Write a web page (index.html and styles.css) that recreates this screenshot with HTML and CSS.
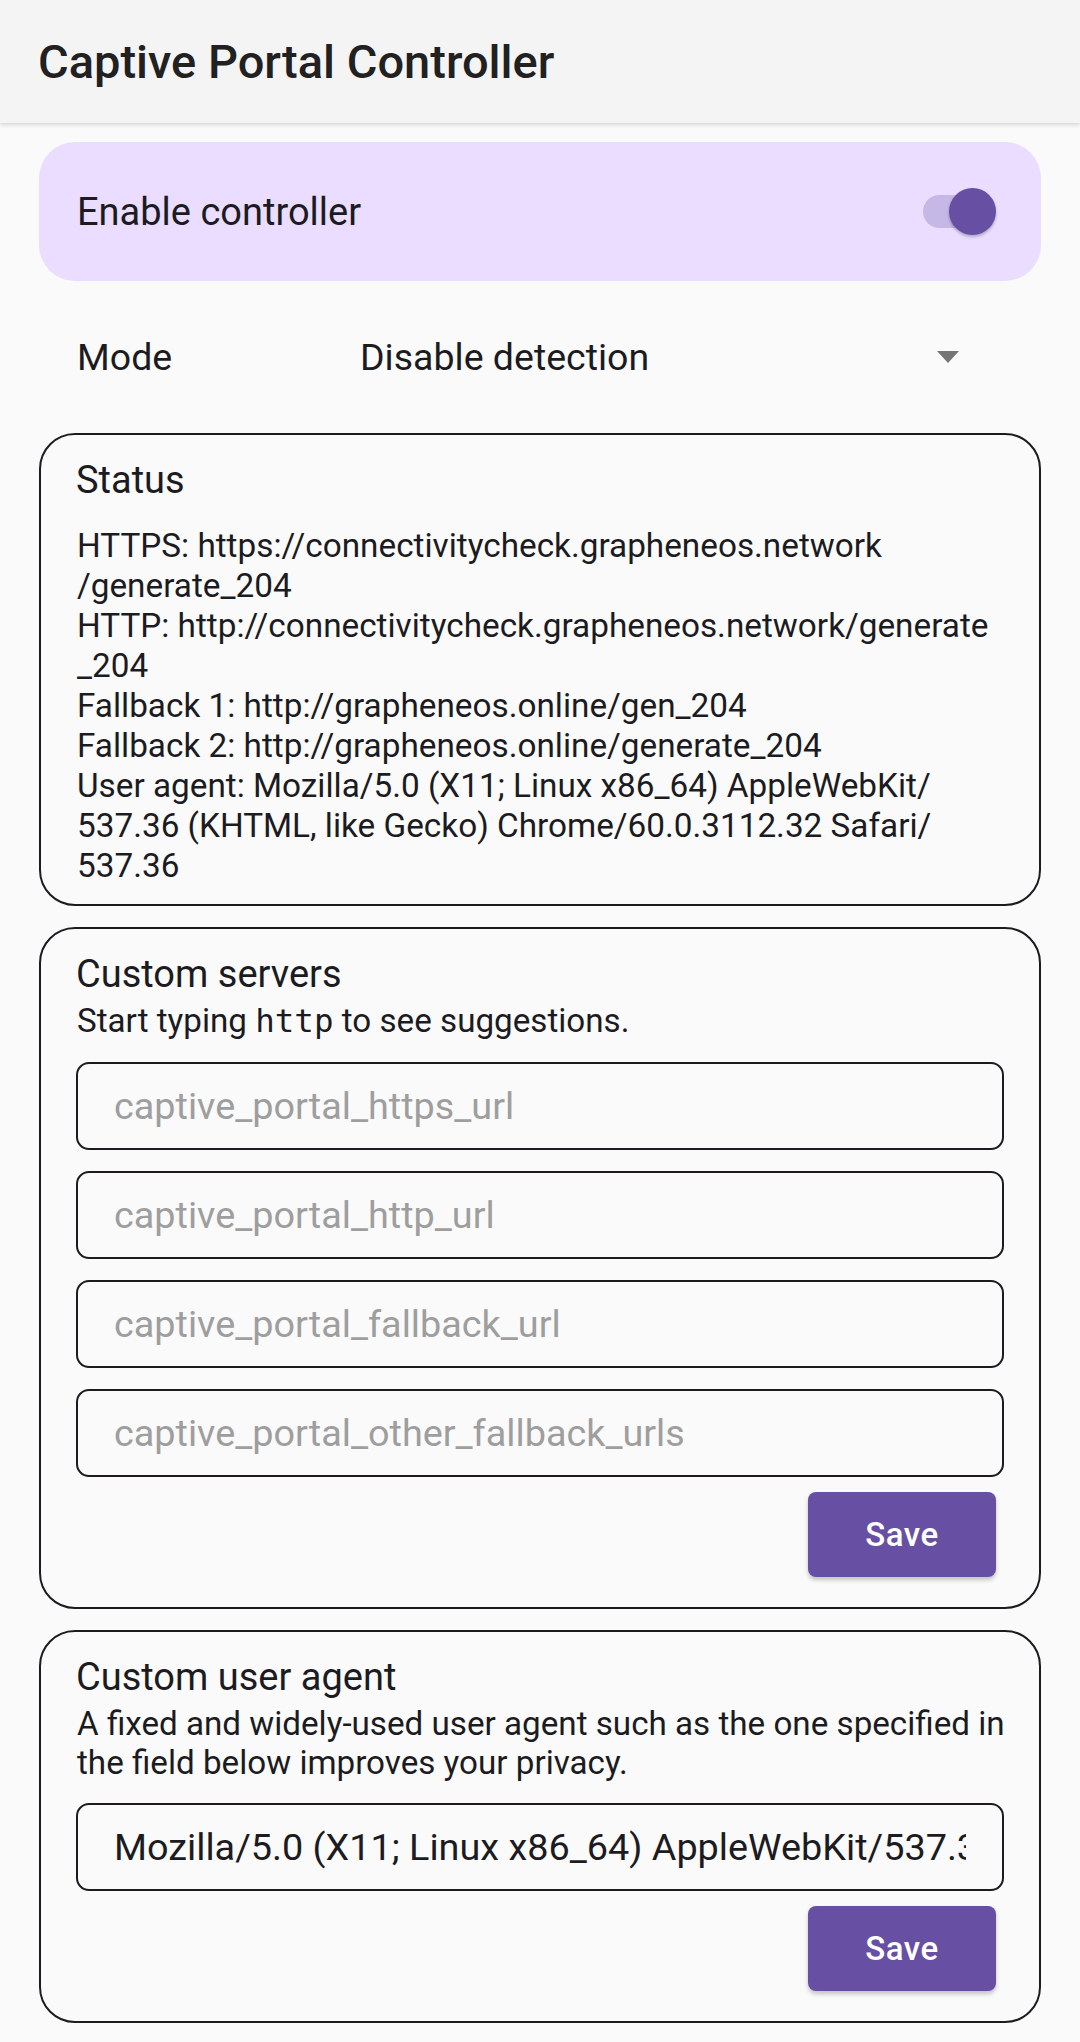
FILE: index.html
```html
<!DOCTYPE html>
<html lang="en">
<head>
<meta charset="utf-8">
<title>Captive Portal Controller</title>
<link rel="stylesheet" href="styles.css">
</head>
<body>
<header class="appbar">
  <h1 class="appbar-title">Captive Portal Controller</h1>
</header>
<main class="content">
  <section class="enable-card">
    <span class="enable-label">Enable controller</span>
    <span class="switch" role="switch" aria-checked="true">
      <span class="switch-track"></span>
      <span class="switch-thumb"></span>
    </span>
  </section>

  <div class="mode-row">
    <span class="mode-label">Mode</span>
    <span class="mode-value">Disable detection</span>
    <span class="dropdown-arrow"></span>
  </div>

  <section class="card">
    <h2 class="card-title">Status</h2>
    <p class="status-text">
      <span class="line">HTTPS: https://connectivitycheck.grapheneos.network</span>
      <span class="line">/generate_204</span>
      <span class="line">HTTP: http://connectivitycheck.grapheneos.network/generate</span>
      <span class="line">_204</span>
      <span class="line">Fallback 1: http://grapheneos.online/gen_204</span>
      <span class="line">Fallback 2: http://grapheneos.online/generate_204</span>
      <span class="line">User agent: Mozilla/5.0 (X11; Linux x86_64) AppleWebKit/</span>
      <span class="line">537.36 (KHTML, like Gecko) Chrome/60.0.3112.32 Safari/</span>
      <span class="line">537.36</span>
    </p>
  </section>

  <section class="card">
    <h2 class="card-title">Custom servers</h2>
    <p class="card-desc">Start typing <code class="mono">http</code> to see suggestions.</p>
    <div class="fields">
      <input class="field" type="text" placeholder="captive_portal_https_url">
      <input class="field" type="text" placeholder="captive_portal_http_url">
      <input class="field" type="text" placeholder="captive_portal_fallback_url">
      <input class="field" type="text" placeholder="captive_portal_other_fallback_urls">
    </div>
    <div class="actions">
      <button class="btn" type="button">Save</button>
    </div>
  </section>

  <section class="card">
    <h2 class="card-title">Custom user agent</h2>
    <p class="card-desc">
      <span class="line">A fixed and widely-used user agent such as the one specified in</span>
      <span class="line">the field below improves your privacy.</span>
    </p>
    <div class="fields">
      <input class="field" type="text" value="Mozilla/5.0 (X11; Linux x86_64) AppleWebKit/537.36 (KHTML, like Gecko) Chrome/60.0.3112.32 Safari/537.36">
    </div>
    <div class="actions">
      <button class="btn" type="button">Save</button>
    </div>
  </section>
</main>
</body>
</html>
```

FILE: styles.css
```css
* {
  box-sizing: border-box;
}

html, body {
  margin: 0;
  padding: 0;
}

body {
  width: 1080px;
  min-height: 2042px;
  background: #fafafa;
  font-family: Roboto, "Noto Sans", "Liberation Sans", sans-serif;
  color: #1c1b1f;
  overflow: hidden;
}

/* App bar */
.appbar {
  height: 123px;
  background: #f4f4f4;
  display: flex;
  align-items: center;
  padding: 0 38px;
  box-shadow: 0 2px 4px rgba(0, 0, 0, 0.14);
  position: relative;
  z-index: 1;
}

.appbar-title {
  margin: 0;
  font-size: 47px;
  font-weight: 500;
  color: #212121;
  line-height: 56px;
}

/* Content column */
.content {
  display: flex;
  flex-direction: column;
  gap: 21px;
  padding: 19px 39px 0;
}

/* Enable card */
.enable-card {
  height: 139px;
  background: #eaddff;
  border-radius: 36px;
  display: flex;
  align-items: center;
  justify-content: space-between;
  padding: 0 45px 0 38px;
}

.enable-label {
  font-size: 38px;
  color: #1c1b1f;
}

.switch {
  position: relative;
  width: 73px;
  height: 47px;
  display: block;
}

.switch-track {
  position: absolute;
  left: 0;
  top: 7px;
  width: 66px;
  height: 33px;
  border-radius: 17px;
  background: #c6b8e6;
}

.switch-thumb {
  position: absolute;
  right: 0;
  top: 0;
  width: 47px;
  height: 47px;
  border-radius: 50%;
  background: #674fa3;
  box-shadow: 0 2px 3px rgba(0, 0, 0, 0.25);
}

/* Mode row */
.mode-row {
  height: 110px;
  display: grid;
  grid-template-columns: 283px 1fr auto;
  align-items: center;
  padding: 0 82px 0 38px;
  font-size: 37.5px;
  color: #1c1b1f;
}

.dropdown-arrow {
  width: 0;
  height: 0;
  border-left: 11px solid transparent;
  border-right: 11px solid transparent;
  border-top: 12px solid #757575;
}

/* Cards */
.card {
  border: 2px solid #1d1b20;
  border-radius: 36px;
  padding: 23px 35px 0;
}

.card-title {
  margin: 0;
  font-size: 38px;
  font-weight: 400;
  line-height: 44px;
  color: #1c1b1f;
}

.status-text {
  margin: 23.5px 0 0;
  padding-bottom: 18.5px;
  font-size: 33.3px;
  line-height: 40px;
  color: #1c1b1f;
}

.line {
  display: block;
  white-space: nowrap;
}

.status-text .line {
  padding-left: 1px;
}

.card-desc {
  margin: 5px 0 21px;
  font-size: 33.2px;
  line-height: 39px;
  color: #1c1b1f;
  padding-left: 1px;
}

.mono {
  font-family: "DejaVu Sans Mono", "Liberation Mono", monospace;
  font-size: 32.5px;
}

.fields {
  display: flex;
  flex-direction: column;
  gap: 21px;
}

.field {
  display: block;
  width: 100%;
  height: 88px;
  border: 2px solid #1d1b20;
  border-radius: 13px;
  background: transparent;
  padding: 0 36px;
  font-family: Roboto, "Noto Sans", "Liberation Sans", sans-serif;
  font-size: 37.8px;
  color: #1c1b1f;
  outline: none;
}

.field::placeholder {
  color: #9e9e9e;
}

.actions {
  display: flex;
  justify-content: flex-end;
  padding: 15px 8px 30px 0;
}

.btn {
  width: 188px;
  height: 85px;
  border: none;
  border-radius: 8px;
  background: #6750a4;
  color: #ffffff;
  font-family: Roboto, "Noto Sans", "Liberation Sans", sans-serif;
  font-size: 33px;
  font-weight: 500;
  letter-spacing: 0.5px;
  box-shadow: 0 3px 4px rgba(0, 0, 0, 0.22);
}
```
